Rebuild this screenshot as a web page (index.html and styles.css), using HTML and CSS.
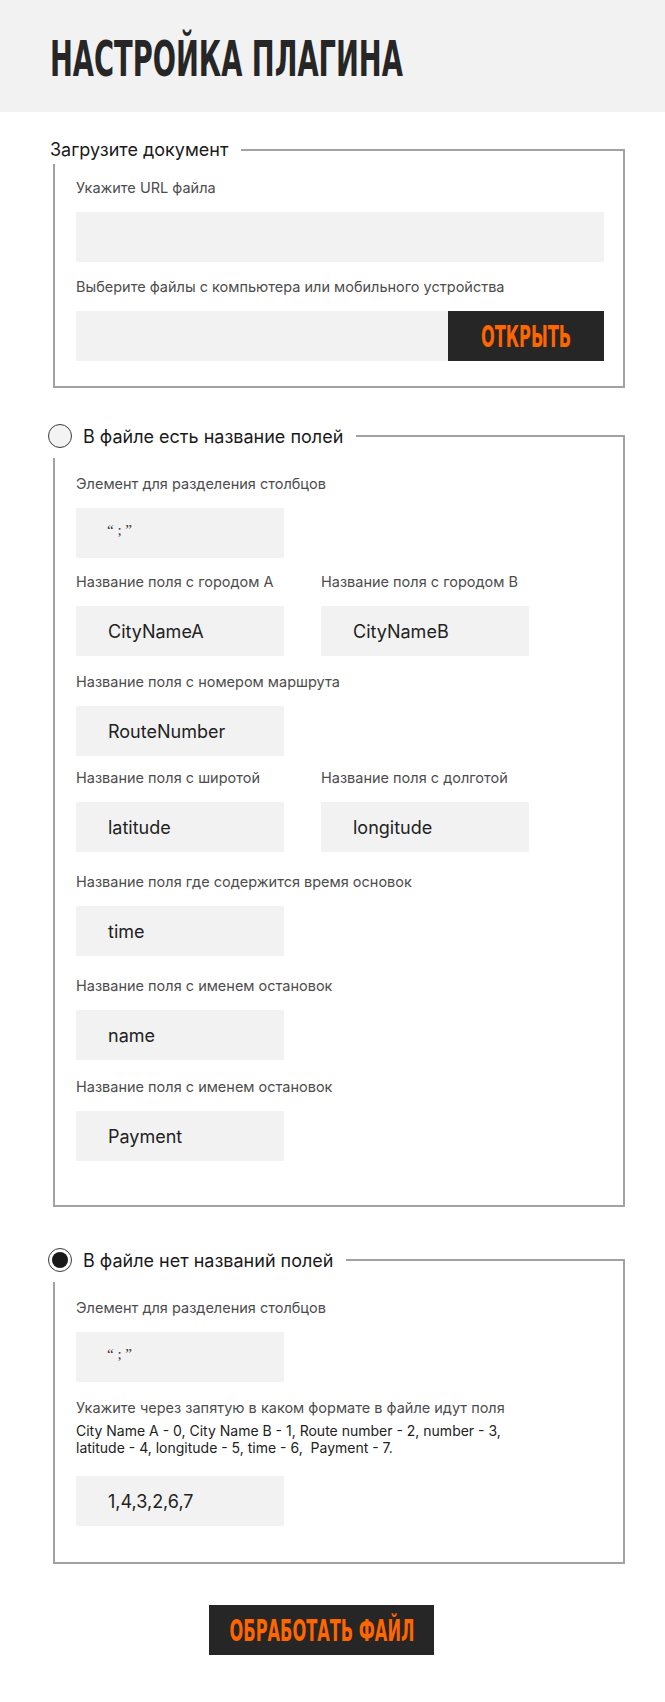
FILE: index.html
```html
<!DOCTYPE html>
<html lang="ru">
<head>
<meta charset="utf-8">
<title>Настройка плагина</title>
<link rel="stylesheet" href="styles.css">
</head>
<body>
<header class="topbar">
  <h1 class="title"><span class="condensed">НАСТРОЙКА ПЛАГИНА</span></h1>
</header>
<main class="content">
  <section class="group group--first">
    <div class="group-box">
      <div class="group-head group-head--text"><span class="group-title">Загрузите документ</span></div>
      <div class="field">
        <div class="label">Укажите URL файла</div>
        <div class="input"></div>
      </div>
      <div class="field">
        <div class="label">Выберите файлы с компьютера или мобильного устройства</div>
        <div class="file-row">
          <div class="input file-input"></div>
          <button class="btn btn--open"><span class="condensed">ОТКРЫТЬ</span></button>
        </div>
      </div>
    </div>
  </section>

  <section class="group group--radio">
    <div class="group-box">
      <div class="group-head group-head--radio"><span class="radio"></span><span class="group-title">В файле есть название полей</span></div>
      <div class="field">
        <div class="label">Элемент для разделения столбцов</div>
        <div class="input input--small"><span class="sep">“ ; ”</span></div>
      </div>
      <div class="row row--tight">
        <div class="field">
          <div class="label">Название поля с городом A</div>
          <div class="input input--small"><span class="value">CityNameA</span></div>
        </div>
        <div class="field">
          <div class="label">Название поля с городом B</div>
          <div class="input input--small"><span class="value">CityNameB</span></div>
        </div>
      </div>
      <div class="field">
        <div class="label">Название поля с номером маршрута</div>
        <div class="input input--small"><span class="value">RouteNumber</span></div>
      </div>
      <div class="row row--tighter">
        <div class="field">
          <div class="label">Название поля с широтой</div>
          <div class="input input--small"><span class="value">latitude</span></div>
        </div>
        <div class="field">
          <div class="label">Название поля с долготой</div>
          <div class="input input--small"><span class="value">longitude</span></div>
        </div>
      </div>
      <div class="field field--loose">
        <div class="label">Название поля где содержится время основок</div>
        <div class="input input--small"><span class="value">time</span></div>
      </div>
      <div class="field field--loose">
        <div class="label">Название поля с именем остановок</div>
        <div class="input input--small"><span class="value">name</span></div>
      </div>
      <div class="field field--mid">
        <div class="label">Название поля с именем остановок</div>
        <div class="input input--small"><span class="value">Payment</span></div>
      </div>
    </div>
  </section>

  <section class="group group--radio group--last">
    <div class="group-box">
      <div class="group-head group-head--radio"><span class="radio radio--checked"></span><span class="group-title">В файле нет названий полей</span></div>
      <div class="field">
        <div class="label">Элемент для разделения столбцов</div>
        <div class="input input--small"><span class="sep">“ ; ”</span></div>
      </div>
      <div class="field field--hint">
        <div class="label">Укажите через запятую в каком формате в файле идут поля</div>
        <div class="hint">City Name A - 0, City Name B - 1, Route number - 2, number - 3,<br>latitude - 4, longitude - 5, time - 6,&nbsp; Payment - 7.</div>
        <div class="input input--small"><span class="value">1,4,3,2,6,7</span></div>
      </div>
    </div>
  </section>

  <div class="actions">
    <button class="btn btn--process"><span class="condensed">ОБРАБОТАТЬ ФАЙЛ</span></button>
  </div>
</main>
</body>
</html>
```

FILE: styles.css
```css
* { box-sizing: border-box; }

body {
  margin: 0;
  background: #ffffff;
  font-family: Inter, "Noto Sans", sans-serif;
  color: #222222;
}

.topbar {
  background: #f2f2f2;
  height: 112px;
  padding: 35px 0 0 50px;
}

.title {
  margin: 0;
  font-family: "DejaVu Sans Condensed", "DejaVu Sans", sans-serif;
  font-weight: 700;
  font-size: 49px;
  line-height: 49px;
  color: #262626;
}

.condensed {
  display: inline-block;
  transform: scaleX(0.62);
  transform-origin: left center;
  white-space: nowrap;
}

.content {
  padding: 37px 40px 46px 53px;
}

.group-box {
  position: relative;
  border: 2px solid #a2a2a2;
  padding: 27px 19px 25px 21px;
}

.group--radio { margin-top: 47px; }
.group--radio .group-box { padding: 37px 19px 44px 21px; }
.group--last { margin-top: 52px; }
.group--last .group-box { padding-bottom: 36px; }

.group-head {
  position: absolute;
  background: #ffffff;
  display: flex;
  align-items: center;
  padding-right: 13px;
}

.group-head--text {
  left: -5px;
  top: -17px;
  height: 30px;
}

.group-head--radio {
  left: -7px;
  top: -23px;
  height: 44px;
  gap: 11px;
}

.group-title {
  font-size: 18px;
  color: #1a1a1a;
  white-space: nowrap;
}

.radio {
  position: relative;
  width: 24px;
  height: 24px;
  border-radius: 50%;
  border: 1.5px solid #3a3a3a;
  background: #f3f3f3;
  flex: none;
}

.radio--checked { background: #ffffff; }
.radio--checked::after {
  content: "";
  position: absolute;
  left: 2.5px;
  top: 2.5px;
  width: 16px;
  height: 16px;
  border-radius: 50%;
  background: #1a1a1a;
}

.field + .field,
.row + .field,
.field + .row,
.row + .row { margin-top: 16px; }

.row > .field { margin-top: 0; }

.group--first .field + .field { margin-top: 15px; }

.row--tight { margin-top: 14px !important; }
.row--tighter { margin-top: 12px !important; }
.field--loose { margin-top: 20px !important; }
.field--mid { margin-top: 17px !important; }

.row {
  display: flex;
  gap: 37px;
}

.label {
  font-size: 14.5px;
  line-height: 20px;
  color: #4d4d4d;
  margin-bottom: 14px;
  white-space: nowrap;
}

.input {
  height: 50px;
  background: #f2f2f2;
  display: flex;
  align-items: center;
}

.input--small { width: 208px; }

.value {
  padding-left: 32px;
  font-size: 18px;
  color: #222222;
}

.sep {
  padding-left: 31px;
  font-family: "Liberation Serif", serif;
  font-size: 15px;
  color: #333333;
  margin-top: -6px;
}

.file-row { display: flex; }
.file-input { flex: 1; }

.btn {
  border: 0;
  margin: 0;
  padding: 0;
  background: #262626;
  color: #ff6600;
  font-family: "DejaVu Sans Condensed", "DejaVu Sans", sans-serif;
  font-weight: 700;
  font-size: 30px;
  height: 50px;
  display: flex;
  align-items: center;
  justify-content: center;
  cursor: pointer;
}

.btn .condensed { transform: scaleX(0.6); transform-origin: center center; }

.btn--open { width: 156px; }

.field--hint .label { margin-bottom: 4px; }

.hint {
  font-size: 14px;
  line-height: 17px;
  color: #222222;
  margin-bottom: 20px;
  white-space: nowrap;
}

.actions {
  margin-top: 41px;
  padding-left: 156px;
}

.btn--process { width: 225px; }
```
